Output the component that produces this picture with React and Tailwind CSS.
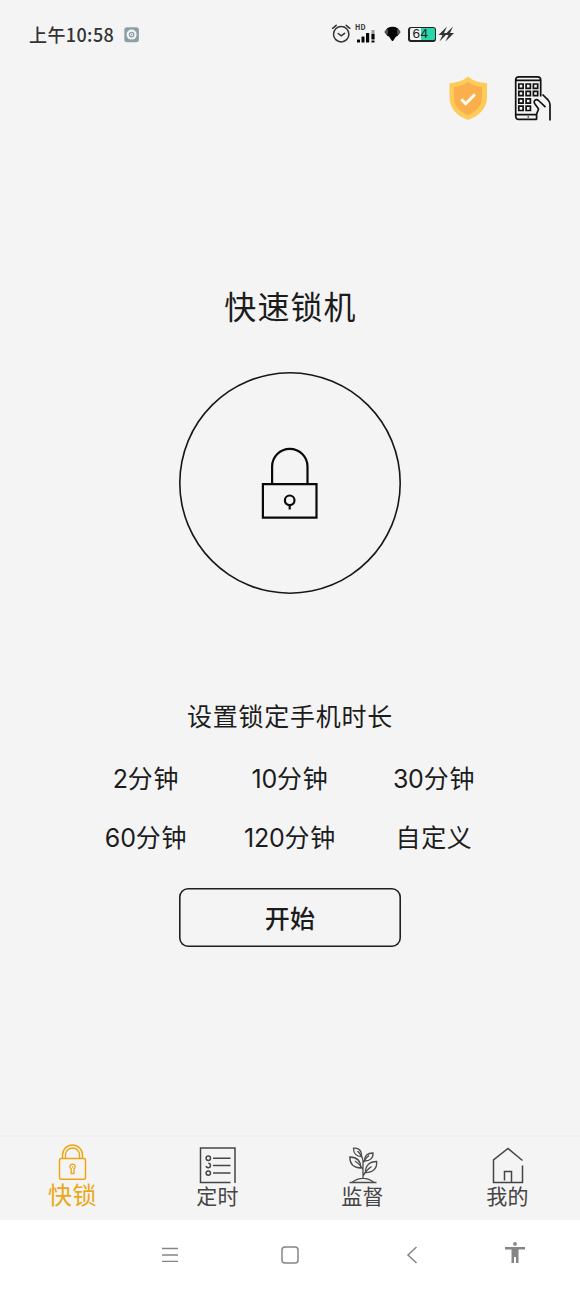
import React from "react";

const durations = [
  { amount: "2", unit: "分钟" },
  { amount: "10", unit: "分钟" },
  { amount: "30", unit: "分钟" },
  { amount: "60", unit: "分钟" },
  { amount: "120", unit: "分钟" },
  { amount: "", unit: "自定义" },
];

function StatusBar() {
  return (
    <header className="flex h-[68px] items-center pt-px pl-[29px] text-[#333]">
      <span className="w-[95px] whitespace-nowrap pb-[2px] text-[18px] leading-6 font-medium tracking-[0.4px]">上午10:58</span>
      <svg className="h-4 w-4 shrink-0" viewBox="0 0 16 16">
        <rect x="0.3" y="0.3" width="14.6" height="15" rx="2.8" fill="#8e9fa3" />
        <circle cx="7.6" cy="7.6" r="5" fill="#f3f5f5" />
        <circle cx="7.6" cy="7.6" r="2.3" fill="none" stroke="#8e9fa3" strokeWidth="1.2" />
        <circle cx="7.6" cy="7.6" r="0.8" fill="#8e9fa3" />
      </svg>
      <div className="ml-[190px] flex items-center pb-px">
        <svg className="h-[22px] w-[22px]" viewBox="0 0 22 22" fill="none" stroke="#333" strokeWidth="1.5" strokeLinecap="round">
          <circle cx="11.2" cy="11.2" r="7.7" />
          <path d="M2.6 5.3 6.2 2.3M19.8 5.3 16.2 2.3M8.2 10.5l3 2.4 3.4-2.6" />
        </svg>
        <div className="ml-[2px] flex h-[26px] w-[22px] flex-col">
          <span className="h-[8px] pl-px text-[7px] leading-[12px] font-bold tracking-[0.3px]">HD</span>
          <svg className="h-[15px] w-[22px]" viewBox="0 0 22 15" fill="#050505">
            <rect x="3" y="10.5" width="3" height="3" rx="0.5" />
            <rect x="7.5" y="7.5" width="3" height="6" rx="0.5" />
            <rect x="12" y="4" width="3.2" height="9.5" rx="0.5" />
            <path d="M17.5 1h3v9h-3z" fill="#999" />
            <path d="M17.5 5h3v5.5h-3zM17.500 11.500h3v2h-3z" />
          </svg>
        </div>
        <svg className="ml-[8px] h-4 w-[17px]" viewBox="0 0 17 16">
          <path d="M3.2 2.3Q8.5-.6 13.8 2.3L16.500 6l-3 4-1.500.5-3 4.500H8l-3-4.500-1.500-.5L.5 6z" fill="#050505" />
          <path d="m.5 6 3-3.500.5 3.500-.5 3M16.500 6l-3-3.500-.5 3.500.5 3" fill="#555" />
        </svg>
        <div className="ml-[7px] flex h-[15px] w-[28px] items-center rounded-[3px] bg-[#222] p-[1.500px]">
          <div className="flex h-full w-full items-center rounded-[1.500px] bg-linear-to-r from-[#f3f3f3] from-45% to-[#27d9aa] to-45% pl-[3px]">
            <span className="font-['Liberation_Sans'] text-[13.500px] leading-3 tracking-[0.500px] text-[#222]">64</span>
          </div>
        </div>
        <svg className="ml-[2px] h-4 w-4" viewBox="0 0 16 16" fill="#333">
          <path d="M9 .5 .5 9h4L1.500 15.500 9.800 7H6zM15 .5 6.500 9h4L7.500 15.500 16 7h-4z" />
        </svg>
      </div>
    </header>
  );
}

function ShieldIcon() {
  return (
    <svg className="h-[46px] w-[40px]" viewBox="0 0 40 46">
      <path d="M20 1.5C15 6 8 7.800 1.500 8.200V22c0 12 8 19 18.500 23C30.500 41 39 34 39 22V8.200C32 7.800 25 6 20 1.500Z" fill="#fdcb57" />
      <path d="M20 6.700C16 10 11 11.400 6 11.900V22c0 9.300 6.200 15 14 18.300C27.800 37 34 31.300 34 22V11.900C29 11.400 24 10 20 6.700Z" fill="#f9b04c" />
      <path d="m13.300 24.300 4.400 4.400 9.300-9.500" fill="none" stroke="#fffdf4" strokeWidth="3" />
    </svg>
  );
}

function PhoneIcon() {
  return (
    <svg className="h-[46px] w-[38px]" viewBox="0 0 38 46" fill="none" stroke="#111" strokeWidth="1.700">
      <path d="M27.700 21.500V5q0-3.200-3.200-3.200H6Q2.700 1.800 2.700 5v36q0 3.400 3.300 3.400h17.700M2.700 5.300h25M2.700 39.600h21" />
      <path d="M5.800 9h4.300v4.300H5.800zM13.100 9h4.300v4.300h-4.300zM20.400 9h4.300v4.300h-4.300zM5.800 16.400h4.300v4.300H5.800zM13.100 16.400h4.300v4.300h-4.300zM20.400 16.400h4.300v4.300h-4.300zM5.800 23.800h4.300v4.300H5.800zM13.100 23.800h4.300v4.300h-4.300zM5.800 31.200h4.300v4.300H5.800zM13.100 31.200h4.300v4.300h-4.300z" />
      <path d="m32.500 32.200-7-6.700q-2-1.600-3.700-.2-1.300 1.300-.2 3.200l4 5.500-2 5v5.800M29.500 19.500l5.700 5.700q1.800 2 1.800 4.500V45.500" strokeLinejoin="round" />
      <circle cx="15.200" cy="42" r="0.800" fill="#111" stroke="none" />
    </svg>
  );
}

function BigLock() {
  return (
    <svg className="h-[74px] w-[60px]" viewBox="0 0 60 74" fill="none" stroke="#090909" strokeWidth="2.200">
      <path d="M12.100 38V20.500a17.700 17.700 0 0 1 35.400 0V38M2.900 38.200h53.600v33.500H2.900z" />
      <circle cx="29.700" cy="54.300" r="4.800" />
      <path d="M29.700 59v4.500" />
    </svg>
  );
}

function LockIcon() {
  return (
    <svg className="h-[38px] w-[30px]" viewBox="0 0 30 38" fill="none" stroke="#eba716" strokeWidth="1.500">
      <rect x="1.500" y="15.500" width="26" height="20.800" rx="1.500" />
      <path d="M4.500 15.500V12a10 10 0 0 1 20 0v3.500M7.500 15.500V12a7 7 0 0 1 14 0v3.500" />
      <path d="M13.200 30.500v-4.600a2.600 2.600 0 1 1 2.800 0v4.600zM14 24h1.200" strokeWidth="1.300" />
    </svg>
  );
}

function ListIcon() {
  return (
    <svg className="h-[38px] w-[38px]" viewBox="0 0 38 38" fill="none" stroke="#454545" strokeWidth="1.500">
      <path d="M31.500 36.500H1.500V2h34.500v35M14 12.300h17.500M14 19.600h17.500M14 27.100h17.500" />
      <circle cx="9.300" cy="12.300" r="2.200" />
      <circle cx="9.300" cy="27.100" r="2.200" />
      <path d="M9.300 17.300a2.200 2.200 0 1 1-2.200 2.700" />
    </svg>
  );
}

function PlantIcon() {
  return (
    <svg className="h-[38px] w-[30px]" viewBox="0 0 30 38" fill="none" stroke="#4b4b4b" strokeWidth="1.300">
      <path d="M15 33V15q-.5-5-5.500-10M15 23.500q-3-5.500-8-8.500M15 30q3-6 8.500-9.500M15 17q1.500-4 6-7.500M1.500 36.500h27M4.500 36q4.500-3.700 10.500-3.700T25.500 36" />
      <path d="M5.500 2.200c5-.8 8.300 2.200 8 8.300-5 0-8-3.300-8-8.300ZM25 7c.5 5-3 8-8.500 8C16.500 10 19.500 7 25 7ZM1.800 11c7 .2 11 4 11 11C5.500 21.800 1.800 17.500 1.800 11ZM28.700 15.500c.5 7.300-4 11-11.200 11C17.200 19.700 21.500 15.500 28.700 15.500Z" />
    </svg>
  );
}

function HomeIcon() {
  return (
    <svg className="h-[38px] w-[34px]" viewBox="0 0 34 38" fill="none" stroke="#454545" strokeWidth="1.500">
      <path d="M31.500 14.500 17 2.500 2.500 13.800v22.700h29v-17M13.500 34.500v-9h7v11" />
    </svg>
  );
}

const tabs = [
  { label: "定时", icon: <ListIcon /> },
  { label: "监督", icon: <PlantIcon /> },
  { label: "我的", icon: <HomeIcon /> },
];

export default function App() {
  return (
    <div className="flex h-[1289px] w-[580px] flex-col overflow-hidden bg-[#f4f4f4] font-['Noto_Sans_CJK_SC',sans-serif] text-[#1c1c1c]">
      <StatusBar />
      <div className="flex h-[60px] justify-end gap-[25px] pt-[7px] pr-[29px]">
        <ShieldIcon />
        <PhoneIcon />
      </div>
      <main className="flex h-[1007px] flex-col items-center pt-[153px]">
        <h1 className="h-12 pl-px text-[32px] leading-12 tracking-[1.1px]">快速锁机</h1>
        <div className="mt-[43px] flex h-[222px] w-[222px] items-center justify-center rounded-full shadow-[inset_0_0_0_1.6px_#171717]">
          <BigLock />
        </div>
        <h2 className="mt-[101px] h-10 text-[25px] leading-10 tracking-[0.75px]">设置锁定手机时长</h2>
        <div className="mt-[22px] grid w-[432px] grid-cols-3 gap-y-[19px]">
          {durations.map(({ amount, unit }) => (
            <button key={amount + unit} className="h-10 text-center text-[25px] leading-10 tracking-[0.7px]">
              {amount && <span className="font-['Inter'] text-[25px] leading-none tracking-[-0.2px]">{amount}</span>}
              {unit}
            </button>
          ))}
        </div>
        <button className="mt-[32px] h-[59px] w-[222px] rounded-[9px] pb-px text-[25px] leading-10 font-medium tracking-[0.2px] shadow-[inset_0_0_0_1.6px_#202020]">开始</button>
      </main>
      <nav className="grid h-[85px] grid-cols-4 border-t-2 border-[#eeeeee] text-[#454545]">
        <div className="flex flex-col items-center pt-[6px] text-[#eba716]">
          <LockIcon />
          <span className="text-[24px] leading-[26px] tracking-[0.6px]">快锁</span>
        </div>
        {tabs.map((tab) => (
          <div key={tab.label} className="flex flex-col items-center pt-[9px]">
            {tab.icon}
            <span className="text-[21px] leading-[22px] tracking-[0.3px]">{tab.label}</span>
          </div>
        ))}
      </nav>
      <footer className="flex h-[69px] items-center bg-white pl-[161px] text-[#858585]">
        <svg className="h-5 w-[18px]" viewBox="0 0 18 20" stroke="currentColor" strokeWidth="1.300"><path d="M1 3.500h16M1 10h16M1 16.300h16" /></svg>
        <svg className="ml-[101px] h-5 w-5" viewBox="0 0 20 20" fill="none" stroke="currentColor" strokeWidth="1.500"><rect x="2" y="2" width="16" height="16" rx="3" /></svg>
        <svg className="ml-[106px] h-5 w-3" viewBox="0 0 12 20" fill="none" stroke="currentColor" strokeWidth="1.500"><path d="m10.500 2-8.500 8 8.500 8" /></svg>
        <svg className="mb-[3px] ml-[87px] h-[22px] w-5" viewBox="0 0 20 22" fill="currentColor"><circle cx="10" cy="1.900" r="1.900" /><path d="M0 5h20v2.500h-6.500V21H11v-6H9v6H6.500V7.500H0z" /></svg>
      </footer>
    </div>
  );
}
